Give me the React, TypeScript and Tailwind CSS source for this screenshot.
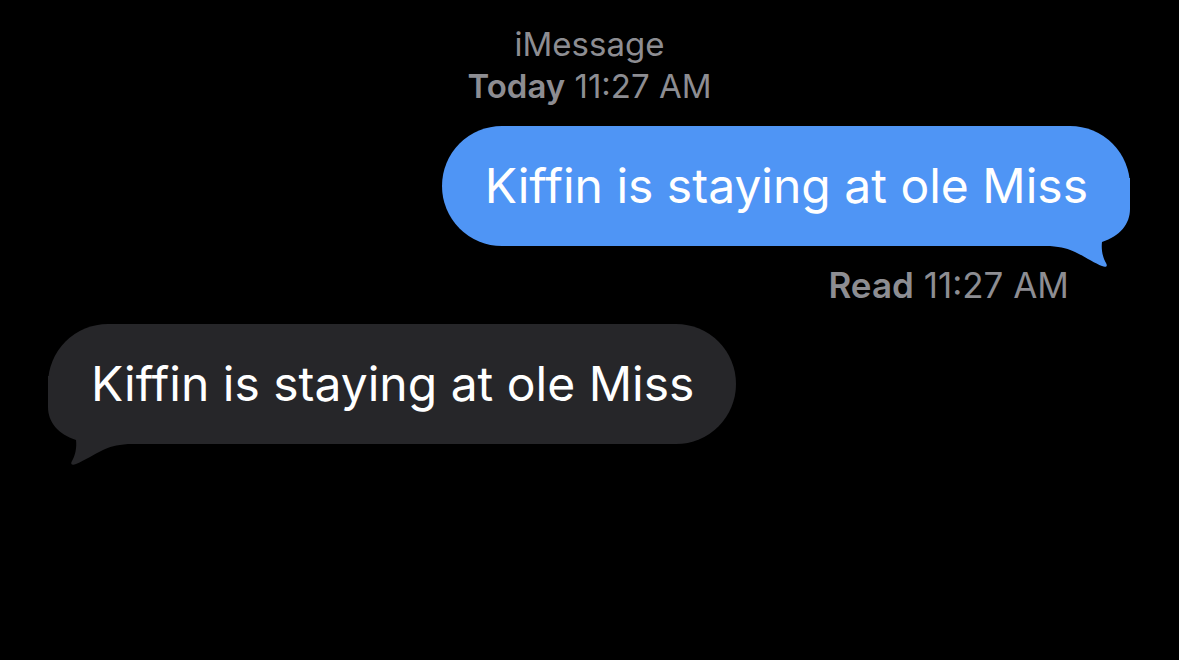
import React from 'react';

const TAIL_PATH =
    'M 80 0 L 80 31 C 80 46 70 58 52 64 C 51 72 53 80 56 85 C 58 88 56 90 52 88 C 44 85 34 78 25 74 C 19 71 12 69 0 68 L 0 0 Z';

const Tail: React.FC<{ color: string; flip?: boolean }> = ({ color, flip }) => (
    <svg
        width="80"
        height="90"
        viewBox="0 0 80 90"
        className={`absolute bottom-[-22px] ${flip ? 'left-0 -scale-x-100' : 'right-0'}`}
    >
        <path d={TAIL_PATH} fill={color} />
    </svg>
);

const Bubble: React.FC<{ text: string; sent?: boolean }> = ({ text, sent }) => (
    <div
        className={`relative h-[120px] flex items-center pl-[43px] pr-[42px] rounded-[60px] text-white text-[48px] ${
            sent ? 'bg-[#4f95f5]' : 'bg-[#262629]'
        }`}
    >
        <Tail color={sent ? '#4f95f5' : '#262629'} flip={!sent} />
        <span className="relative">{text}</span>
    </div>
);

export default function App() {
    return (
        <div
            className="w-[1179px] h-[660px] bg-black overflow-hidden"
            style={{ fontFamily: 'Inter, "Noto Sans", sans-serif' }}
        >
            <div className="pt-[23px] flex flex-col items-center text-[#8d8d92] text-[33px] leading-[42px]">
                <div>iMessage</div>
                <div>
                    <span className="font-semibold">Today</span> 11:27 AM
                </div>
            </div>

            <div className="mt-[19px] flex justify-end pr-[49px]">
                <Bubble sent text="Kiffin is staying at ole Miss" />
            </div>
            <div className="mt-[20px] flex justify-end pr-[110px] text-[#8d8d92] text-[35px] leading-[38px]">
                <span>
                    <span className="font-semibold">Read</span> 11:27 AM
                </span>
            </div>

            <div className="mt-[20px] flex justify-start pl-[48px]">
                <Bubble text="Kiffin is staying at ole Miss" />
            </div>
        </div>
    );
}
